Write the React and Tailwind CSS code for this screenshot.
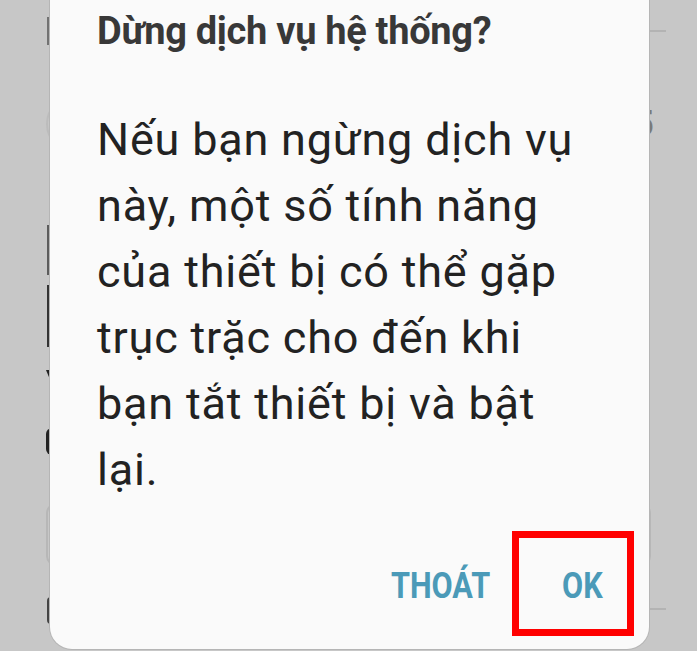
import React from "react";

// Settings screen that sits dimmed behind the dialog
const SettingsBackdrop = () => (
  <div className="flex flex-col pl-[46px] pr-[31px]">
    <div className="mt-[17px] flex h-[28px] items-center">
      <div className="ml-[1px] h-[28px] w-[3px] bg-[#727272]" />
      <div className="ml-[12px] h-[2px] flex-1 bg-[#b3b3b3]" />
    </div>
    <div className="mt-[50px] flex h-[58px] items-center justify-between">
      <div className="h-[58px] w-[58px] rounded-full border-2 border-[#bcbcbc]" />
      <span className="mr-[12px] text-[36px] font-bold leading-none text-[#7a7a7a]">5</span>
    </div>
    <div className="ml-[1px] mt-[72px] h-[50px] w-[3px] bg-[#5c5c5c]" />
    <div className="ml-[1px] mt-[10px] h-[62px] w-[4px] bg-[#333]" />
    <div className="mt-[23px] h-[12px] w-[5px] bg-[#222] [clip-path:polygon(0_0,100%_0,100%_100%)]" />
    <div className="mt-[46px] h-[27px] w-[6px] rounded-l-full bg-[#222]" />
    <div className="mt-[48px] h-[63px] w-[605px] rounded-[10px] border-2 border-[#b7b7b7]" />
    <div className="mt-[31px] flex h-[27px] items-center">
      <div className="ml-[1px] h-[27px] w-[4px] rounded-l-full bg-[#444]" />
      <div className="ml-[12px] mt-[-3px] h-[2px] flex-1 bg-[#b3b3b3]" />
    </div>
  </div>
);

export default function App() {
  return (
    <div className="relative h-[651px] w-[697px] overflow-hidden bg-[#c7c7c7] font-['Roboto',sans-serif]">
      <SettingsBackdrop />

      {/* system dialog */}
      <div className="absolute left-[50px] top-0 flex h-[649px] w-[599px] flex-col rounded-b-[22px] bg-[#fafafa] shadow-[0_0_0_1px_#b5b5b5]">
        <h2 className="mt-[6px] whitespace-nowrap pl-[47px] text-[38px] font-bold leading-[50px] tracking-[-0.3px] text-[#383838]">
          Dừng dịch vụ hệ thống?
        </h2>
        <p className="mt-[51px] pl-[47px] pr-[20px] text-[45px] leading-[66px] tracking-[0.8px] text-[#222]">
          Nếu bạn ngừng dịch vụ
          <br />
          này, một số tính năng
          <br />
          của thiết bị có thể gặp
          <br />
          trục trặc cho đến khi
          <br />
          bạn tắt thiết bị và bật
          <br />
          lại.
        </p>
        <div className="mt-auto mb-[13px] flex items-baseline justify-end pr-[15px]">
          <button className="mr-[22px] text-[36.5px] font-bold leading-[36px] text-[#4b9ab8]">
            <span className="inline-block origin-right scale-x-[0.84]">THOÁT</span>
          </button>
          <button className="flex h-[105px] w-[122px] items-start border-[7px] border-[#ff0000] pl-[43px] pt-[30px] text-[36.5px] font-bold leading-[36px] text-[#4b9ab8]">
            <span className="inline-block origin-left scale-x-[0.84]">OK</span>
          </button>
        </div>
      </div>
    </div>
  );
}
